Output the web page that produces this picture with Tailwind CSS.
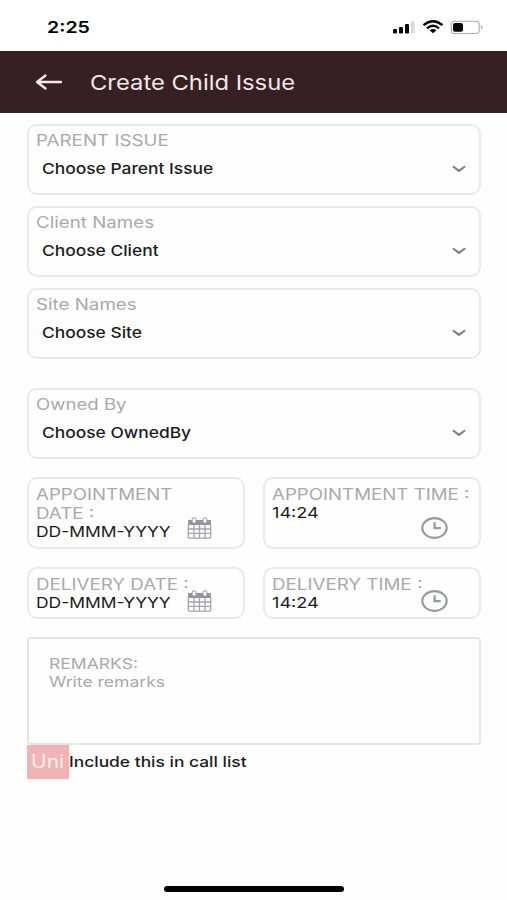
<!DOCTYPE html>
<html lang="en">
<head>
<meta charset="utf-8">
<meta name="viewport" content="width=device-width, initial-scale=1">
<title>Create Child Issue</title>
<script src="https://cdn.jsdelivr.net/npm/@tailwindcss/browser@4"></script>
</head>
<body class="bg-[#fefefe] font-['Inter','Liberation_Sans',sans-serif] text-[#1c1c1c]">
<svg class="hidden">
  <symbol id="chevron" viewBox="0 0 14 8"><path d="M1.5 1.7 7 5.900 12.5 1.7" fill="none" stroke="#7d7d7d" stroke-width="2" stroke-linecap="round" stroke-linejoin="round"/></symbol>
  <symbol id="calendar" viewBox="0 0 24 22">
    <path d="M.6 3h22.8v5H.6z" fill="#94949c"/>
    <path d="M.8 7.500V20.200q0 1 1 1H22.200q1 0 1-1V7.500M1 12H23M1 16.400H23M6.500 8V21M12 8V21M17.500 8V21" fill="none" stroke="#a3a3aa" stroke-width="1.300"/>
    <rect x="4.600" y=".7" width="4" height="5.600" rx="2" fill="#fefefe" stroke="#94949c"/>
    <rect x="15.400" y=".7" width="4" height="5.600" rx="2" fill="#fefefe" stroke="#94949c"/>
  </symbol>
  <symbol id="clock" viewBox="0 0 27 22"><ellipse cx="13.500" cy="11" rx="12.200" ry="9.900" fill="none" stroke="#97999d" stroke-width="2.100"/><path d="M13.600 5.300V11.200H19.800" fill="none" stroke="#97999d" stroke-width="2.300"/></symbol>
</svg>
<div class="flex h-[900px] w-[507px] flex-col overflow-hidden">
  <div class="flex h-[51px] shrink-0 items-start bg-white pl-[47px] pr-[24px]">
    <span class="mt-[17px] origin-left scale-x-[1.22] text-[16px] leading-[20px] font-semibold whitespace-nowrap text-black">2:25</span>
    <svg class="mt-[18px] ml-auto h-[18px] w-[92px]" viewBox="0 0 92 18">
      <g fill="#050505"><rect x="2" y="11" width="4" height="4.500" rx="1.300"/><rect x="8" y="9" width="4" height="6.500" rx="1.300"/><rect x="14" y="6" width="4" height="9.500" rx="1.300"/><rect x="20" y="3" width="3.500" height="12.500" rx="1.200" fill="#dadada"/></g>
      <g fill="none" stroke="#050505" stroke-width="2.400"><path d="M32.500 7.200Q42 -.8 51.500 7.200"/><path d="M36 10.300Q42 5.300 48 10.300"/></g>
      <path d="M38.600 12.300Q42 9.700 45.400 12.300L42 15.200Z" fill="#050505"/>
      <rect x="60.200" y="3.200" width="28" height="12.300" rx="3.500" fill="#fff" stroke="#aaa" stroke-width="1.100"/>
      <rect x="62" y="5" width="10" height="8.800" rx="2" fill="#050505"/><path d="M90 7.500q2.400 1.700 0 3.500Z" fill="#999"/>
    </svg>
  </div>
  <header class="flex h-[61.500px] shrink-0 items-center bg-[#362023] pl-[35px]">
    <svg class="h-[18px] w-[28px]" viewBox="0 0 28 18"><path d="M26 9H2M10.500 2.500 2 9l8.500 6.500" fill="none" stroke="#f3e9e9" stroke-width="2.300" stroke-linecap="round" stroke-linejoin="round"/></svg>
    <h1 class="mt-[2px] ml-[26.500px] origin-left scale-x-[1.16] text-[20.500px] leading-[26px] whitespace-nowrap text-[#f3e9e9]">Create Child Issue</h1>
  </header>
  <main class="flex flex-col pl-[26.500px] pt-[11px]">
    <div class="flex w-[454.500px] flex-col">
      <section class="flex h-[71.500px] flex-col rounded-[10px] border-2 border-[#e9e9ea] pl-[7.500px] pt-[5.500px]">
        <span class="w-fit origin-left scale-x-[1.21] text-[15.500px] leading-[20px] whitespace-nowrap text-[#a9a9ad]">PARENT ISSUE</span>
        <div class="mt-[8px] flex items-center justify-between pl-[6px] pr-[13px]"><span class="origin-left scale-x-[1.16] text-[15px] leading-[20px] font-medium whitespace-nowrap">Choose Parent Issue</span><svg class="h-[8px] w-[14px]"><use href="#chevron"/></svg></div>
      </section>
      <section class="mt-[10.500px] flex h-[71.500px] flex-col rounded-[10px] border-2 border-[#e9e9ea] pl-[7.500px] pt-[5.500px]">
        <span class="w-fit origin-left scale-x-[1.21] text-[15.500px] leading-[20px] whitespace-nowrap text-[#a9a9ad]">Client Names</span>
        <div class="mt-[8px] flex items-center justify-between pl-[6px] pr-[13px]"><span class="origin-left scale-x-[1.16] text-[15px] leading-[20px] font-medium whitespace-nowrap">Choose Client</span><svg class="h-[8px] w-[14px]"><use href="#chevron"/></svg></div>
      </section>
      <section class="mt-[10.500px] flex h-[71.500px] flex-col rounded-[10px] border-2 border-[#e9e9ea] pl-[7.500px] pt-[5.500px]">
        <span class="w-fit origin-left scale-x-[1.21] text-[15.500px] leading-[20px] whitespace-nowrap text-[#a9a9ad]">Site Names</span>
        <div class="mt-[8px] flex items-center justify-between pl-[6px] pr-[13px]"><span class="origin-left scale-x-[1.16] text-[15px] leading-[20px] font-medium whitespace-nowrap">Choose Site</span><svg class="h-[8px] w-[14px]"><use href="#chevron"/></svg></div>
      </section>
      <section class="mt-[28.500px] flex h-[71.500px] flex-col rounded-[10px] border-2 border-[#e9e9ea] pl-[7.500px] pt-[5.500px]">
        <span class="w-fit origin-left scale-x-[1.2] text-[15.500px] leading-[20px] whitespace-nowrap text-[#a9a9ad]">Owned By</span>
        <div class="mt-[8px] flex items-center justify-between pl-[6px] pr-[13px]"><span class="origin-left scale-x-[1.16] text-[15px] leading-[20px] font-medium whitespace-nowrap">Choose OwnedBy</span><svg class="h-[8px] w-[14px]"><use href="#chevron"/></svg></div>
      </section>
      <div class="mt-[18px] grid grid-cols-2 gap-[18px]">
        <section class="relative h-[71.500px] rounded-[10px] border-2 border-[#e9e9ea] pl-[7.500px] pt-[6px]">
          <span class="block w-fit origin-left scale-x-[1.205] text-[15.500px] leading-[19px] whitespace-nowrap text-[#a9a9ad]">APPOINTMENT<br>DATE :</span>
          <span class="block w-fit origin-left scale-x-[1.165] text-[15px] leading-[18px] whitespace-nowrap">DD-MMM-YYYY</span>
          <svg class="absolute right-[31px] bottom-[7.500px] h-[22px] w-[25px]"><use href="#calendar"/></svg>
        </section>
        <section class="relative h-[71.500px] rounded-[10px] border-2 border-[#e9e9ea] pl-[7.500px] pt-[6px]">
          <span class="block w-fit origin-left scale-x-[1.205] text-[15.500px] leading-[19px] whitespace-nowrap text-[#a9a9ad]">APPOINTMENT TIME :</span>
          <span class="block w-fit origin-left scale-x-[1.21] text-[15px] leading-[18px] whitespace-nowrap">14:24</span>
          <svg class="absolute right-[31.500px] bottom-[7.500px] h-[22px] w-[27px]"><use href="#clock"/></svg>
        </section>
      </div>
      <div class="mt-[18px] grid grid-cols-2 gap-[18px]">
        <section class="relative h-[52px] rounded-[10px] border-2 border-[#e9e9ea] pl-[7.500px] pt-[6px]">
          <span class="block w-fit origin-left scale-x-[1.21] text-[15.500px] leading-[19px] whitespace-nowrap text-[#a9a9ad]">DELIVERY DATE :</span>
          <span class="block w-fit origin-left scale-x-[1.165] text-[15px] leading-[18px] whitespace-nowrap">DD-MMM-YYYY</span>
          <svg class="absolute right-[31px] bottom-[4.500px] h-[22px] w-[25px]"><use href="#calendar"/></svg>
        </section>
        <section class="relative h-[52px] rounded-[10px] border-2 border-[#e9e9ea] pl-[7.500px] pt-[6px]">
          <span class="block w-fit origin-left scale-x-[1.21] text-[15.500px] leading-[19px] whitespace-nowrap text-[#a9a9ad]">DELIVERY TIME :</span>
          <span class="block w-fit origin-left scale-x-[1.21] text-[15px] leading-[18px] whitespace-nowrap">14:24</span>
          <svg class="absolute right-[31.500px] bottom-[4.500px] h-[22px] w-[27px]"><use href="#clock"/></svg>
        </section>
      </div>
      <section class="mt-[18px] h-[108px] rounded-[4px] border-2 border-[#e4e4e4] pl-[20.500px] pt-[16.500px] text-[#a9a9a9]">
        <span class="block w-fit origin-left scale-x-[1.21] text-[14.500px] leading-[18px] whitespace-nowrap">REMARKS:</span>
        <span class="block w-fit origin-left scale-x-[1.21] text-[14.500px] leading-[18px] whitespace-nowrap">Write remarks</span>
      </section>
    </div>
    <div class="flex h-[34px] items-center">
      <div class="flex h-full w-[42px] items-center bg-[#f2b3b5] pt-px pl-[4.500px]"><span class="origin-left scale-x-[1.17] text-[18px] leading-[22px] text-[#fdf0ee]">Uni</span></div>
      <span class="origin-left scale-x-[1.2] text-[14.500px] leading-[20px] font-medium whitespace-nowrap">Include this in call list</span>
    </div>
  </main>
  <div class="mt-auto mb-[8.500px] ml-[164px] h-[5.500px] w-[180px] shrink-0 rounded-full bg-black"></div>
</div>
</body>
</html>
